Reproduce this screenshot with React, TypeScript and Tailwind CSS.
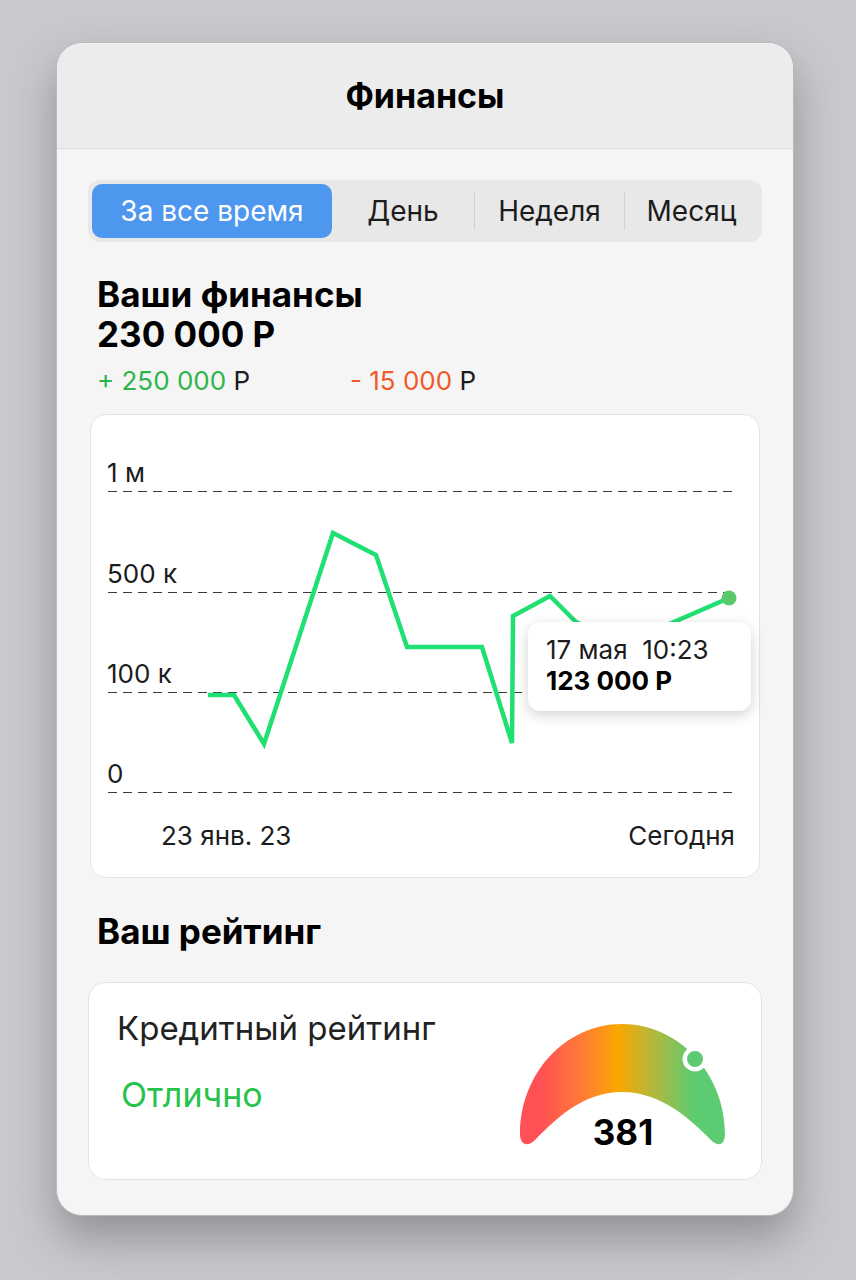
import React, { useState } from 'react';

const tabs = [
  { label: 'За все время', w: 'w-[240px]' },
  { label: 'День', w: 'w-[142px]' },
  { label: 'Неделя', w: 'w-[149px]' },
  { label: 'Месяц', w: 'flex-1' },
];

const points = [
  [117, 280], [143, 280], [173, 329], [242, 118], [285, 140], [316, 232],
  [391, 232], [421, 328], [422, 201], [459, 181], [485, 207], [530, 230], [638, 183],
];

const grid = [
  { y: 76, label: '1 м' },
  { y: 177, label: '500 к' },
  { y: 277, label: '100 к' },
  { y: 377, label: '0' },
];

const FinanceChart: React.FC = () => (
  <div className="relative mx-[2px] mt-[18px] h-[464px] rounded-2xl border border-[#e4e4e4] bg-white">
    <svg width="670" height="464" className="absolute left-0 top-0">
      {grid.map(g => (
        <g key={g.label}>
          <line x1="17" x2="646" y1={g.y + 0.5} y2={g.y + 0.5} stroke="#3a3a3a" strokeWidth="1" strokeDasharray="9 6" />
          <text x="16" y={g.y - 9} fontSize="26" fill="#1c1c1c" fontFamily="Inter, sans-serif">
            {g.label}
          </text>
        </g>
      ))}
      <polyline
        points={points.map(p => p.join(',')).join(' ')}
        fill="none"
        stroke="#1fe071"
        strokeWidth="4.5"
        strokeLinejoin="miter"
      />
      <circle cx="638" cy="183" r="7.5" fill="#5cc86e" />
      <text x="70" y="430" fontSize="26" fill="#1c1c1c" fontFamily="Inter, sans-serif">23 янв. 23</text>
      <text x="644" y="430" fontSize="26" fill="#1c1c1c" textAnchor="end" fontFamily="Inter, sans-serif">Сегодня</text>
    </svg>
    {/* tooltip */}
    <div className="absolute left-[437px] top-[207px] w-[223px] h-[89px] rounded-xl bg-white px-[18px] pt-[12px] shadow-[0_4px_14px_rgba(0,0,0,0.18)]">
      <div className="text-[26px] leading-[31px] text-[#1c1c1c] whitespace-nowrap">17 мая&nbsp;&nbsp;10:23</div>
      <div className="text-[26px] leading-[31px] font-bold text-black whitespace-nowrap">123 000 Р</div>
    </div>
  </div>
);

const Gauge: React.FC = () => (
  <div className="relative w-[212px] h-[128px]">
    <svg width="212" height="128" viewBox="0 0 212 128" className="absolute left-0 top-0">
      <defs>
        <linearGradient id="gaugeGrad" x1="0" x2="1" y1="0" y2="0">
          <stop offset="0.1" stopColor="#ff5055" />
          <stop offset="0.3" stopColor="#ff7a36" />
          <stop offset="0.48" stopColor="#f9a800" />
          <stop offset="0.65" stopColor="#b3b83c" />
          <stop offset="0.85" stopColor="#5ccb72" />
        </linearGradient>
      </defs>
      <path
        d="M3 112 C3 52 48 2 105 2 C162 2 208 52 208 112 C208 122 202 126 194 118 C176 100 146 70 105 70 C64 70 36 100 18 118 C10 126 3 122 3 112 Z"
        fill="url(#gaugeGrad)"
      />
      <circle cx="178" cy="37" r="12.5" fill="#fff" />
      <circle cx="178" cy="37" r="8" fill="#5ccb72" />
    </svg>
    <div className="absolute left-0 right-0 top-[90px] text-center text-[35px] leading-[40px] font-bold text-black">381</div>
  </div>
);

export default function App() {
  const [active, setActive] = useState(0);

  return (
    <div className="w-[856px] h-[1280px] bg-[#c8c9cd] pt-[42px] pl-[56px]" style={{ fontFamily: 'Inter, "Liberation Sans", sans-serif' }}>
      <div className="w-[738px] h-[1174px] overflow-hidden rounded-[26px] border border-[#b9babd] bg-[#f5f5f5] shadow-[0_22px_44px_rgba(0,0,0,0.28)]">
        {/* Header */}
        <div className="flex h-[106px] items-center justify-center border-b border-[#dcdcdc] bg-[#ececec]">
          <h1 className="text-[34px] font-bold text-black">Финансы</h1>
        </div>

        <div className="px-[31px] pt-[31px]">
          {/* Segmented control */}
          <div className="flex h-[62px] items-center rounded-xl bg-[#e8e8e8] p-1">
            {tabs.map((t, i) => (
              <React.Fragment key={t.label}>
                {i > 1 && <div className="h-[38px] w-px bg-[#d0d0d0]" />}
                <button
                  onClick={() => setActive(i)}
                  className={`${t.w} h-full flex items-center justify-center text-[28px] ${
                    active === i ? 'rounded-[10px] bg-[#4e97ee] text-white' : 'text-[#1c1c1c]'
                  }`}
                >
                  {t.label}
                </button>
              </React.Fragment>
            ))}
          </div>

          {/* Summary */}
          <div className="mt-8 pl-[9px]">
            <h2 className="text-[35px] font-bold leading-[40px] text-black">Ваши финансы</h2>
            <div className="text-[35px] font-bold leading-[40px] text-black">230 000 Р</div>
            <div className="mt-[12px] flex text-[26px] leading-[30px]">
              <span className="w-[253px] text-[#2db54a]">
                + 250 000 <span className="text-[#1c1c1c]">Р</span>
              </span>
              <span className="text-[#f05a28]">
                - 15 000 <span className="text-[#1c1c1c]">Р</span>
              </span>
            </div>
          </div>

          <FinanceChart />

          <h2 className="mt-[33px] pl-[9px] text-[35px] font-bold leading-[40px] text-black">Ваш рейтинг</h2>

          {/* Rating card */}
          <div className="mt-[31px] flex h-[198px] items-start justify-between rounded-[18px] border border-[#e4e4e4] bg-white pl-[28px] pr-[32px]">
            <div className="pt-[25px]">
              <div className="text-[33px] leading-[40px] text-[#222]">Кредитный рейтинг</div>
              <div className="mt-[27px] pl-[4px] text-[34px] leading-[40px] text-[#27c24c]">Отлично</div>
            </div>
            <div className="pt-[39px]">
              <Gauge />
            </div>
          </div>
        </div>
      </div>
    </div>
  );
}
